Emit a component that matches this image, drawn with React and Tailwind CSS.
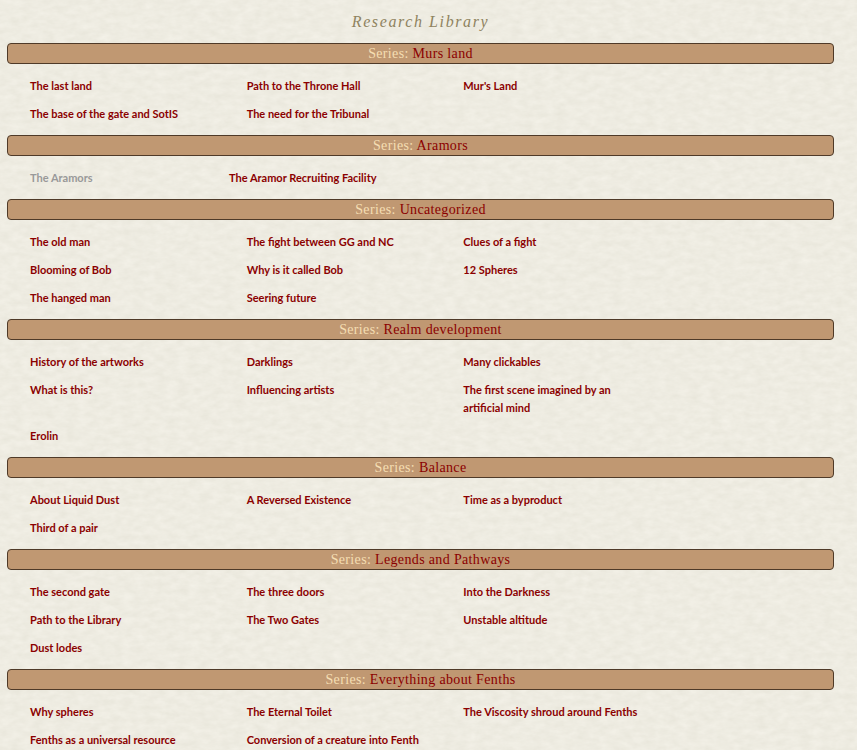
import React from "react";

const series = [
  {
    name: "Murs land",
    links: [
      "The last land",
      "Path to the Throne Hall",
      "Mur's Land",
      "The base of the gate and SotIS",
      "The need for the Tribunal",
    ],
  },
  {
    name: "Aramors",
    compact: true,
    links: ["The Aramors", "The Aramor Recruiting Facility"],
    visited: "The Aramors",
  },
  {
    name: "Uncategorized",
    links: [
      "The old man",
      "The fight between GG and NC",
      "Clues of a fight",
      "Blooming of Bob",
      "Why is it called Bob",
      "12 Spheres",
      "The hanged man",
      "Seering future",
    ],
  },
  {
    name: "Realm development",
    links: [
      "History of the artworks",
      "Darklings",
      "Many clickables",
      "What is this?",
      "Influencing artists",
      "The first scene imagined by an artificial mind",
      "Erolin",
    ],
  },
  {
    name: "Balance",
    links: [
      "About Liquid Dust",
      "A Reversed Existence",
      "Time as a byproduct",
      "Third of a pair",
    ],
  },
  {
    name: "Legends and Pathways",
    links: [
      "The second gate",
      "The three doors",
      "Into the Darkness",
      "Path to the Library",
      "The Two Gates",
      "Unstable altitude",
      "Dust lodes",
    ],
  },
  {
    name: "Everything about Fenths",
    links: [
      "Why spheres",
      "The Eternal Toilet",
      "The Viscosity shroud around Fenths",
      "Fenths as a universal resource",
      "Conversion of a creature into Fenth",
    ],
  },
];

function PaperTexture() {
  return (
    <svg className="absolute inset-0 -z-10 h-full w-full" aria-hidden="true">
      <filter id="paper" x="0" y="0" width="100%" height="100%" colorInterpolationFilters="sRGB">
        <feTurbulence type="fractalNoise" baseFrequency="0.09 0.17" numOctaves="4" seed="8" />
        <feColorMatrix
          values="0.05 0 0 0 0.908
                  0.05 0 0 0 0.899
                  0.06 0 0 0 0.854
                  0 0 0 0 1"
        />
      </filter>
      <rect width="100%" height="100%" filter="url(#paper)" />
    </svg>
  );
}

function Series({ name, links, compact, visited }) {
  return (
    <section>
      <h2 className="h-[21px] rounded border border-[#4f3a28] bg-[#c09872] text-center font-['Liberation_Serif',serif] text-sm leading-[19px] font-normal tracking-wide text-[#8b0000]">
        <span className="text-[#f5deb3]">Series:</span> {name}
      </h2>
      <ul
        className={
          compact
            ? "mt-2 mb-[7px] grid max-w-[673px] grid-cols-[199px_1fr] pl-[23px]"
            : "mt-2 mb-[7px] grid max-w-[673px] grid-cols-3 pl-[23px]"
        }
      >
        {links.map((link) => (
          <li key={link} className="py-[5px] pr-8">
            <a
              href="#"
              className={
                link === visited
                  ? "block text-[#999999]"
                  : "block text-[#8b0000] hover:underline"
              }
            >
              {link}
            </a>
          </li>
        ))}
      </ul>
    </section>
  );
}

function App() {
  return (
    <main className="relative isolate min-h-screen bg-[#eeebe0] pt-[10px] pr-[23px] pl-[7px] font-['Lato',sans-serif] text-[11px] leading-[18px] font-bold">
      <PaperTexture />
      <h1 className="mb-[9px] text-center font-['Liberation_Serif',serif] text-base leading-6 font-normal tracking-widest text-[#8f835f] italic">
        Research Library
      </h1>
      {series.map((item) => (
        <Series key={item.name} {...item} />
      ))}
    </main>
  );
}

export default App;
